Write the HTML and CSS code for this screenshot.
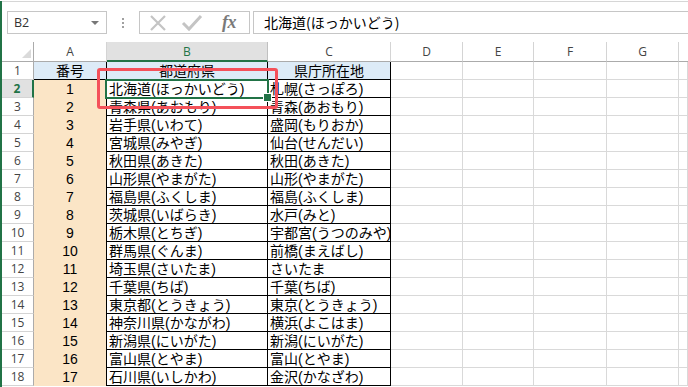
FILE: index.html
```html
<!DOCTYPE html>
<html lang="ja">
<head>
<meta charset="utf-8">
<title>都道府県</title>
<link rel="stylesheet" href="styles.css">
</head>
<body>
<div class="app">
  <div class="topline"></div>
  <div class="fbar">
    <div class="namebox"><span class="ref">B2</span><span class="caret"></span></div>
    <div class="sep"><i></i><i></i><i></i></div>
    <div class="fbtns">
      <svg class="ico" width="20" height="20" viewBox="0 0 20 20"><path d="M3 3 L17 17 M17 3 L3 17" stroke="#c4c4c4" stroke-width="2.2" fill="none"/></svg>
      <svg class="ico" width="22" height="20" viewBox="0 0 22 20"><path d="M2 10 L8 16 L20 3" stroke="#c4c4c4" stroke-width="3" fill="none"/></svg>
      <span class="fx">fx</span>
    </div>
    <div class="finput">北海道(ほっかいどう)</div>
  </div>
  <div class="sheet">
    <div class="grid">
      <div class="corner"><span class="tri"></span></div>
      <div class="ch">A</div><div class="ch sel">B</div><div class="ch">C</div><div class="ch">D</div><div class="ch">E</div><div class="ch">F</div><div class="ch">G</div><div class="ch end"></div>

      <div class="rh">1</div><div class="c a hd">番号</div><div class="c b hd ctr">都道府県</div><div class="c k hd ctr">県庁所在地</div><div class="g"></div><div class="g"></div><div class="g"></div><div class="g"></div><div class="g"></div>
      <div class="rh sel">2</div><div class="c a n">1</div><div class="c b">北海道(ほっかいどう)</div><div class="c k">札幌(さっぽろ)</div><div class="g"></div><div class="g"></div><div class="g"></div><div class="g"></div><div class="g"></div>
      <div class="rh">3</div><div class="c a n">2</div><div class="c b">青森県(あおもり)</div><div class="c k">青森(あおもり)</div><div class="g"></div><div class="g"></div><div class="g"></div><div class="g"></div><div class="g"></div>
      <div class="rh">4</div><div class="c a n">3</div><div class="c b">岩手県(いわて)</div><div class="c k">盛岡(もりおか)</div><div class="g"></div><div class="g"></div><div class="g"></div><div class="g"></div><div class="g"></div>
      <div class="rh">5</div><div class="c a n">4</div><div class="c b">宮城県(みやぎ)</div><div class="c k">仙台(せんだい)</div><div class="g"></div><div class="g"></div><div class="g"></div><div class="g"></div><div class="g"></div>
      <div class="rh">6</div><div class="c a n">5</div><div class="c b">秋田県(あきた)</div><div class="c k">秋田(あきた)</div><div class="g"></div><div class="g"></div><div class="g"></div><div class="g"></div><div class="g"></div>
      <div class="rh">7</div><div class="c a n">6</div><div class="c b">山形県(やまがた)</div><div class="c k">山形(やまがた)</div><div class="g"></div><div class="g"></div><div class="g"></div><div class="g"></div><div class="g"></div>
      <div class="rh">8</div><div class="c a n">7</div><div class="c b">福島県(ふくしま)</div><div class="c k">福島(ふくしま)</div><div class="g"></div><div class="g"></div><div class="g"></div><div class="g"></div><div class="g"></div>
      <div class="rh">9</div><div class="c a n">8</div><div class="c b">茨城県(いばらき)</div><div class="c k">水戸(みと)</div><div class="g"></div><div class="g"></div><div class="g"></div><div class="g"></div><div class="g"></div>
      <div class="rh">10</div><div class="c a n">9</div><div class="c b">栃木県(とちぎ)</div><div class="c k">宇都宮(うつのみや)</div><div class="g"></div><div class="g"></div><div class="g"></div><div class="g"></div><div class="g"></div>
      <div class="rh">11</div><div class="c a n">10</div><div class="c b">群馬県(ぐんま)</div><div class="c k">前橋(まえばし)</div><div class="g"></div><div class="g"></div><div class="g"></div><div class="g"></div><div class="g"></div>
      <div class="rh">12</div><div class="c a n">11</div><div class="c b">埼玉県(さいたま)</div><div class="c k">さいたま</div><div class="g"></div><div class="g"></div><div class="g"></div><div class="g"></div><div class="g"></div>
      <div class="rh">13</div><div class="c a n">12</div><div class="c b">千葉県(ちば)</div><div class="c k">千葉(ちば)</div><div class="g"></div><div class="g"></div><div class="g"></div><div class="g"></div><div class="g"></div>
      <div class="rh">14</div><div class="c a n">13</div><div class="c b">東京都(とうきょう)</div><div class="c k">東京(とうきょう)</div><div class="g"></div><div class="g"></div><div class="g"></div><div class="g"></div><div class="g"></div>
      <div class="rh">15</div><div class="c a n">14</div><div class="c b">神奈川県(かながわ)</div><div class="c k">横浜(よこはま)</div><div class="g"></div><div class="g"></div><div class="g"></div><div class="g"></div><div class="g"></div>
      <div class="rh">16</div><div class="c a n">15</div><div class="c b">新潟県(にいがた)</div><div class="c k">新潟(にいがた)</div><div class="g"></div><div class="g"></div><div class="g"></div><div class="g"></div><div class="g"></div>
      <div class="rh">17</div><div class="c a n">16</div><div class="c b">富山県(とやま)</div><div class="c k">富山(とやま)</div><div class="g"></div><div class="g"></div><div class="g"></div><div class="g"></div><div class="g"></div>
      <div class="rh">18</div><div class="c a n">17</div><div class="c b">石川県(いしかわ)</div><div class="c k">金沢(かなざわ)</div><div class="g"></div><div class="g"></div><div class="g"></div><div class="g"></div><div class="g"></div>
    </div>
    <div class="cursor"><span class="handle"></span></div>
    <div class="mark"></div>
  </div>
</div>
</body>
</html>
```

FILE: styles.css
```css
html, body {
  margin: 0;
  padding: 0;
}
body {
  width: 688px;
  height: 387px;
  overflow: hidden;
  background: #ffffff;
  font-family: "Noto Sans CJK JP", "Noto Sans", sans-serif;
  color: #000;
}
.app {
  border-left: 2px solid #217346;
  height: 387px;
  box-sizing: border-box;
}
.topline {
  height: 1px;
  margin-top: 1px;
  background: #d6d6d6;
}
.fbar {
  display: flex;
  align-items: stretch;
  height: 23px;
  margin-top: 9px;
  margin-bottom: 8px;
  padding-left: 5px;
}
.namebox {
  width: 100px;
  box-sizing: border-box;
  border: 1px solid #c6c6c6;
  display: flex;
  align-items: center;
  justify-content: space-between;
  padding: 0 7px 0 6px;
  font-family: "Open Sans", "Noto Sans", sans-serif;
  font-size: 12.5px;
  color: #333;
}
.caret {
  width: 0;
  height: 0;
  border-left: 4px solid transparent;
  border-right: 4px solid transparent;
  border-top: 4px solid #777;
}
.sep {
  width: 32px;
  display: flex;
  flex-direction: column;
  align-items: center;
  justify-content: center;
  gap: 2px;
}
.sep i {
  display: block;
  width: 2px;
  height: 2px;
  background: #a0a0a0;
}
.fbtns {
  width: 111px;
  box-sizing: border-box;
  border: 1px solid #c6c6c6;
  display: flex;
  align-items: center;
  padding-left: 8px;
  gap: 13px;
}
.fx {
  font-family: "Liberation Serif", serif;
  font-style: italic;
  font-weight: bold;
  font-size: 18px;
  color: #7a7a7a;
  margin-left: 6px;
  letter-spacing: -0.5px;
}
.finput {
  flex: 1;
  margin-left: 3px;
  border: 1px solid #c6c6c6;
  border-right: none;
  font-size: 14px;
  line-height: 21px;
  padding-left: 10px;
  white-space: nowrap;
}
.sheet {
  position: relative;
}
.grid {
  display: grid;
  grid-template-columns: 32px 73px 161px 123px 72px 71px 73px 72px 1fr;
  grid-template-rows: 20px repeat(18, 18px);
}
.grid > div {
  box-sizing: border-box;
  overflow: hidden;
  white-space: nowrap;
}
.corner {
  border-right: 1px solid #ababab;
  border-bottom: 1px solid #ababab;
  position: relative;
}
.tri {
  position: absolute;
  right: 2px;
  bottom: 3px;
  width: 0;
  height: 0;
  border-left: 9px solid transparent;
  border-bottom: 9px solid #dadada;
}
.ch {
  border-right: 1px solid #d4d4d4;
  border-bottom: 1px solid #ababab;
  font-family: "Open Sans", "Noto Sans", sans-serif;
  font-size: 12px;
  color: #444;
  text-align: center;
  line-height: 19px;
}
.ch.sel {
  background: #e1e1e1;
  color: #217346;
  border-bottom: 2px solid #217346;
  border-right-color: #c0c0c0;
}
.ch.end {
  border-right: none;
}
.rh {
  border-right: 1px solid #ababab;
  border-bottom: 1px solid #d4d4d4;
  font-family: "Open Sans", "Noto Sans", sans-serif;
  font-size: 12px;
  color: #444;
  text-align: center;
  line-height: 18px;
}
.rh.sel {
  background: #e1e1e1;
  color: #217346;
  font-weight: bold;
  border-right: 2px solid #217346;
}
.g {
  border-right: 1px solid #d9d9d9;
  border-bottom: 1px solid #d9d9d9;
}
.c {
  font-family: "Liberation Sans", "Noto Sans CJK JP", sans-serif;
  font-size: 14px;
  line-height: 18px;
}
.c.a {
  background: #fbe5c6;
  text-align: center;
  border-right: 1px solid #000;
}
.c.n {
  line-height: 19px;
}
.c.hd {
  background: #ddebf7;
  border-bottom: 1px solid #000;
}
.c.b, .c.k {
  border-right: 1px solid #000;
  border-bottom: 1px solid #000;
  padding-left: 2px;
}
.c.ctr {
  text-align: center;
  padding-left: 0;
}
.cursor {
  position: absolute;
  left: 103px;
  top: 37px;
  width: 164px;
  height: 20px;
  box-sizing: border-box;
  border: 2px solid #217346;
}
.handle {
  position: absolute;
  right: -5px;
  bottom: -5px;
  width: 7px;
  height: 7px;
  background: #217346;
  border: 1px solid #fff;
}
.mark {
  position: absolute;
  left: 95px;
  top: 26px;
  width: 181px;
  height: 41px;
  box-sizing: border-box;
  border: 3px solid #f4515a;
  border-radius: 3px;
}
```
